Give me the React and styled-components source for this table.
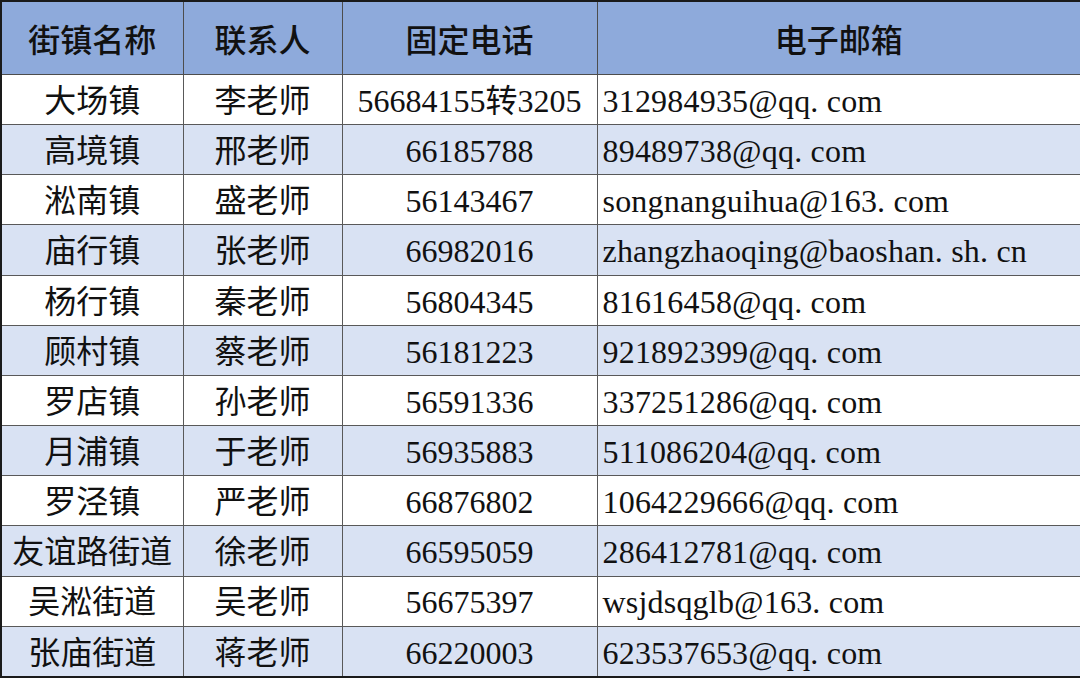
import React from "react";
import styled, { createGlobalStyle } from "styled-components";

const GlobalStyle = createGlobalStyle`
    html, body {
        margin: 0;
        padding: 0;
        background: #ffffff;
    }
    body {
        width: 1080px;
        height: 678px;
        overflow: hidden;
    }
`;

const Table = styled.table`
    width: 1080px;
    height: 678px;
    border-collapse: collapse;
    table-layout: fixed;
    border: 2px solid #1a1a1a;
    font-family: "Liberation Serif", "Noto Sans CJK SC", serif;
    font-size: 32px;
    line-height: 1.2;
    color: #111111;
`;

const HeadCell = styled.th`
    height: 66px;
    background: #8eaadb;
    border: 1px solid #4d4d4d;
    font-weight: 500;
    text-align: center;
    padding: 6px 0 0 0;
    white-space: nowrap;
    overflow: hidden;
`;

const Row = styled.tr`
    background: ${(p) => (p.$alt ? "#d9e2f3" : "#ffffff")};
`;

const Cell = styled.td`
    height: 46px;
    border: 1px solid #595959;
    text-align: ${(p) => (p.$left ? "left" : "center")};
    padding: 3px 0 0 ${(p) => (p.$left ? "5px" : "0")};
    white-space: nowrap;
    overflow: hidden;
    font-weight: 400;
`;

const Mail = styled.span`
    letter-spacing: 0.2px;
`;

const columns = [
    { title: "街镇名称", width: 182 },
    { title: "联系人", width: 159 },
    { title: "固定电话", width: 255 },
    { title: "电子邮箱", width: 484 },
];

const rows = [
    ["大场镇", "李老师", "56684155转3205", "312984935@qq. com"],
    ["高境镇", "邢老师", "66185788", "89489738@qq. com"],
    ["淞南镇", "盛老师", "56143467", "songnanguihua@163. com"],
    ["庙行镇", "张老师", "66982016", "zhangzhaoqing@baoshan. sh. cn"],
    ["杨行镇", "秦老师", "56804345", "81616458@qq. com"],
    ["顾村镇", "蔡老师", "56181223", "921892399@qq. com"],
    ["罗店镇", "孙老师", "56591336", "337251286@qq. com"],
    ["月浦镇", "于老师", "56935883", "511086204@qq. com"],
    ["罗泾镇", "严老师", "66876802", "1064229666@qq. com"],
    ["友谊路街道", "徐老师", "66595059", "286412781@qq. com"],
    ["吴淞街道", "吴老师", "56675397", "wsjdsqglb@163. com"],
    ["张庙街道", "蒋老师", "66220003", "623537653@qq. com"],
];

export default function App() {
    return (
        <>
            <GlobalStyle />
            <Table>
                <colgroup>
                    {columns.map((c) => (
                        <col key={c.title} style={{ width: c.width }} />
                    ))}
                </colgroup>
                <thead>
                    <tr>
                        {columns.map((c) => (
                            <HeadCell key={c.title}>{c.title}</HeadCell>
                        ))}
                    </tr>
                </thead>
                <tbody>
                    {rows.map((r, i) => (
                        <Row key={r[0]} $alt={i % 2 === 1}>
                            <Cell>{r[0]}</Cell>
                            <Cell>{r[1]}</Cell>
                            <Cell>{r[2]}</Cell>
                            <Cell $left>
                                <Mail>{r[3]}</Mail>
                            </Cell>
                        </Row>
                    ))}
                </tbody>
            </Table>
        </>
    );
}
